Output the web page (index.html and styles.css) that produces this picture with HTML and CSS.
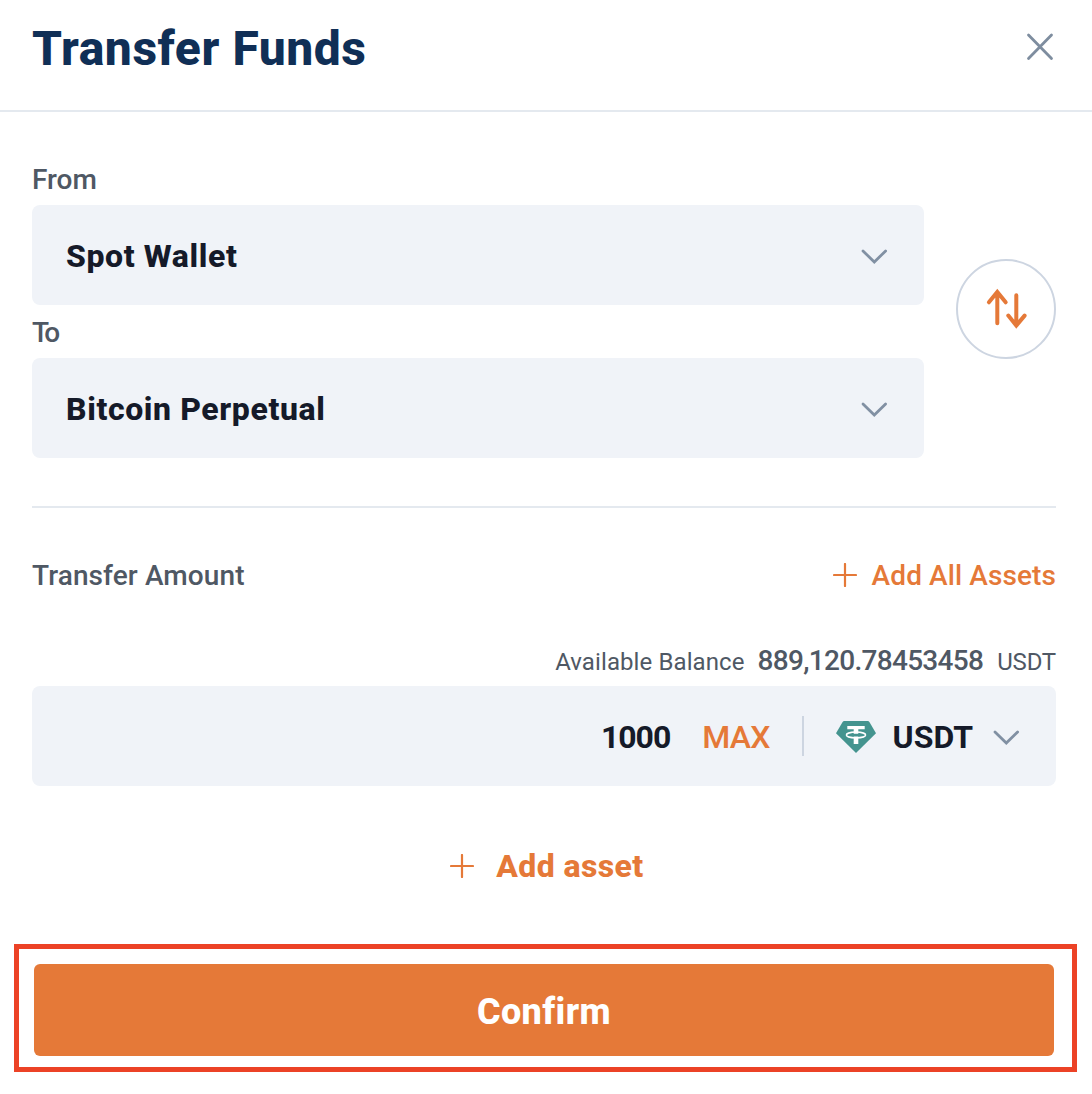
FILE: index.html
```
<!DOCTYPE html>
<html lang="en">
<head>
    <meta charset="UTF-8">
    <meta name="viewport" content="width=device-width, initial-scale=1.0">
    <title>Transfer Funds</title>
    <link rel="stylesheet" href="styles.css">
</head>
<body>
    <div class="modal">
        <div class="modal-header">
            <h1>Transfer Funds</h1>
            <svg class="close" width="32" height="32" viewBox="0 0 32 32">
                <path d="M4.5 4L27.5 27.5M27.5 4L4.5 27.5"/>
            </svg>
        </div>

        <div class="modal-body">
            <div class="wallets">
                <div class="wallet-fields">
                    <div class="label">From</div>
                    <div class="field">
                        <span class="wallet-name">Spot Wallet</span>
                        <svg class="chevron" width="28" height="18" viewBox="0 0 28 18"><path d="M3 3.9L14.3 15.1L25.6 3.9"/></svg>
                    </div>
                    <div class="label label-to">To</div>
                    <div class="field">
                        <span class="wallet-name">Bitcoin Perpetual</span>
                        <svg class="chevron" width="28" height="18" viewBox="0 0 28 18"><path d="M3 3.9L14.3 15.1L25.6 3.9"/></svg>
                    </div>
                </div>
                <div class="swap">
                    <svg width="44" height="44" viewBox="0 0 44 44">
                        <path d="M13.3 5V36.3M4.9 15.3L13.3 5L21.7 15.3"/>
                        <path d="M32.3 8.3V38.5M24.3 28.6L32.3 38.5L40.6 28.6"/>
                    </svg>
                </div>
            </div>

            <div class="amount-header">
                <span>Transfer Amount</span>
                <div class="add-all">
                    <svg class="plus" width="24" height="24" viewBox="0 0 24 24"><path d="M1 12H23M12 1V23"/></svg>
                    <span>Add All Assets</span>
                </div>
            </div>

            <div class="balance">
                <span class="balance-label">Available Balance</span>
                <span class="balance-value">889,120.78453458</span>
                <span class="balance-unit">USDT</span>
            </div>

            <div class="field amount-field">
                <span class="amount">1000</span>
                <span class="max">MAX</span>
                <span class="separator"></span>
                <svg class="coin" width="40" height="32" viewBox="0 0 40 32">
                    <path class="coin-bg" d="M8.2 0H31.8Q32.8 0 33.4 .9L40 12.2L20 32L0 12.2L6.6 .9Q7.2 0 8.2 0Z"/>
                    <path class="coin-mark" d="M11.3 5H28.7V8.2H22.3V12.8H17.7V8.2H11.3ZM17.7 15.5H22.3V23H17.7Z"/>
                    <ellipse class="coin-ring" cx="20" cy="14" rx="9.6" ry="2.9"/>
                </svg>
                <span class="coin-name">USDT</span>
                <svg class="chevron" width="28" height="18" viewBox="0 0 28 18"><path d="M3 3.9L14.3 15.1L25.6 3.9"/></svg>
            </div>

            <div class="add-asset">
                <svg class="plus" width="24" height="24" viewBox="0 0 24 24"><path d="M1 12H23M12 1V23"/></svg>
                <span>Add asset</span>
            </div>
        </div>

        <div class="confirm-frame">
            <button class="confirm">Confirm</button>
        </div>
    </div>
</body>
</html>
```
FILE: styles.css
```
* {
    box-sizing: border-box;
}
body {
    margin: 0;
    background: #fff;
    font-family: Roboto, "Liberation Sans", sans-serif;
    color: #4f5864;
}
svg {
    fill: none;
    flex-shrink: 0;
}
.modal {
    width: 1092px;
    height: 1094px;
    overflow: hidden;
}
.modal-header {
    display: flex;
    justify-content: space-between;
    align-items: center;
    height: 112px;
    padding: 0 36px 16px 32px;
    border-bottom: 2px solid #e4e9ef;
}
.modal-header h1 {
    margin: 0;
    padding-top: 4px;
    font-size: 48px;
    font-weight: 800;
    line-height: 64px;
    letter-spacing: 0.55px;
    color: #102f56;
}
.close {
    stroke: #7e8d9f;
    stroke-width: 2.8;
    stroke-linecap: round;
}
.modal-body {
    padding: 48px 36px 0 32px;
}
.wallets {
    display: flex;
    align-items: center;
    gap: 32px;
    padding-bottom: 48px;
    border-bottom: 2px solid #e4e9ef;
}
.wallet-fields {
    flex: 1;
}
.label {
    height: 45px;
    line-height: 40px;
    font-size: 28px;
    font-weight: 500;
}
.label-to {
    height: 53px;
    line-height: 56px;
    letter-spacing: -3px;
}
.field {
    display: flex;
    align-items: center;
    justify-content: space-between;
    height: 100px;
    padding: 2px 36px 0 34px;
    border-radius: 8px;
    background: #f0f3f8;
    font-size: 32px;
    font-weight: 700;
    color: #151a29;
}
.wallet-name {
    font-weight: 800;
    letter-spacing: 0.6px;
}
.chevron {
    stroke: #8190a3;
    stroke-width: 2.8;
    stroke-linecap: round;
}
.swap {
    display: flex;
    align-items: center;
    justify-content: center;
    width: 100px;
    height: 100px;
    border: 2px solid #cdd5e1;
    border-radius: 50%;
}
.swap svg {
    stroke: #e57938;
    stroke-width: 4;
    stroke-linecap: round;
}
.amount-header {
    display: flex;
    justify-content: space-between;
    align-items: center;
    height: 134px;
    font-size: 28px;
    font-weight: 500;
    letter-spacing: 0.1px;
}
.add-all,
.add-asset {
    display: flex;
    align-items: center;
    color: #e57938;
}
.add-all {
    gap: 15px;
}
.plus {
    stroke: #e57938;
    stroke-width: 2.2;
    stroke-linecap: round;
}
.balance {
    display: flex;
    justify-content: flex-end;
    align-items: baseline;
    height: 44px;
    line-height: 38px;
    font-size: 24px;
}
.balance-label {
    letter-spacing: 0.1px;
}
.balance-value {
    margin: 0 14px 0 13px;
    font-size: 28px;
    font-weight: 500;
    letter-spacing: -0.7px;
}
.balance-unit {
    letter-spacing: -0.2px;
}
.amount-field {
    justify-content: flex-end;
}
.amount {
    letter-spacing: -1px;
}
.max {
    margin-left: 32px;
    font-weight: 500;
    letter-spacing: -0.8px;
    color: #e57938;
}
.separator {
    width: 2px;
    height: 40px;
    margin: -2px 32px 0 32px;
    background: #cdd5e1;
}
.coin-bg {
    fill: #44948f;
}
.coin-mark {
    fill: #fff;
}
.coin-ring {
    stroke: #fff;
    stroke-width: 1.5;
}
.coin-name {
    margin: 0 19px 0 17px;
}
.add-asset {
    justify-content: center;
    gap: 22px;
    height: 160px;
    padding-left: 6px;
    font-size: 32px;
    font-weight: 800;
    letter-spacing: 0.4px;
}
/* frame drawn around the primary action */
.confirm-frame {
    height: 128px;
    margin: -2px 15px 0 14px;
    padding: 15px 18px 0 15px;
    border: 5px solid #ec4226;
}
.confirm {
    display: block;
    width: 100%;
    height: 92px;
    padding: 4px 0 0;
    border: none;
    border-radius: 6px;
    background: #e57938;
    font-family: inherit;
    font-size: 36px;
    font-weight: 800;
    letter-spacing: 0.4px;
    color: #fff;
}
```
